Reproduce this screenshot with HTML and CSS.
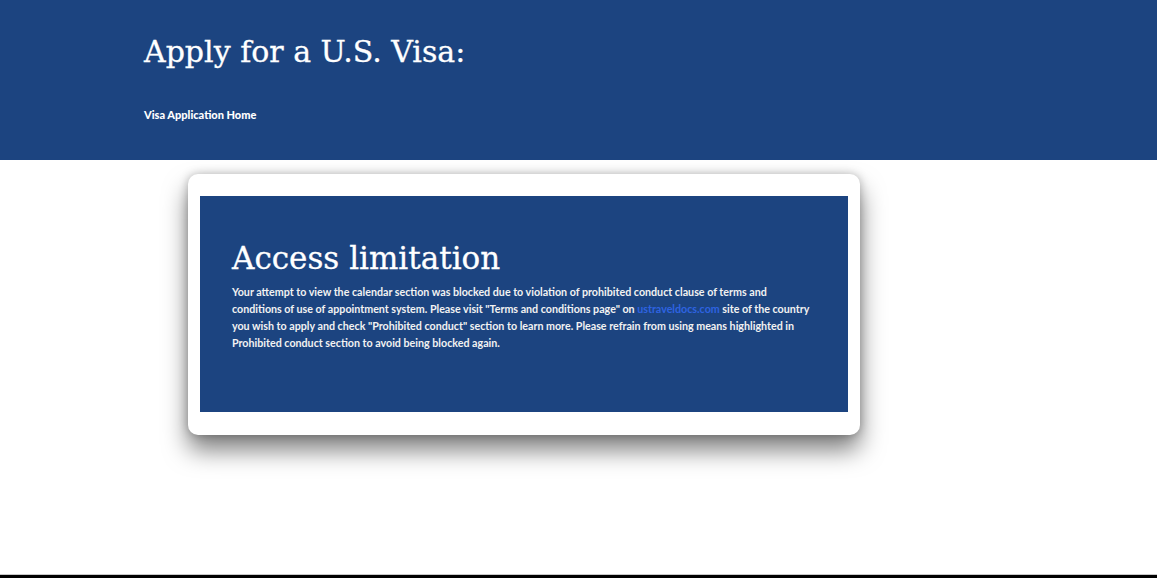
FILE: index.html
```html
<!DOCTYPE html>
<html lang="en">
<head>
<meta charset="utf-8">
<title>Apply for a U.S. Visa</title>
<link rel="stylesheet" href="styles.css">
</head>
<body>
<div class="page">
  <header class="header">
    <h1 class="site-title">Apply for a U.S. Visa:</h1>
    <nav class="nav"><a class="nav-link" href="#">Visa Application Home</a></nav>
  </header>
  <main class="main">
    <div class="card">
      <div class="panel">
        <h2 class="panel-title">Access limitation</h2>
        <p class="panel-text">Your attempt to view the calendar section was blocked due to violation of prohibited conduct clause of terms and conditions of use of appointment system. Please visit "Terms and conditions page" on <a class="link" href="#">ustraveldocs.com</a> site of the country you wish to apply and check "Prohibited conduct" section to learn more. Please refrain from using means highlighted in Prohibited conduct section to avoid being blocked again.</p>
      </div>
    </div>
  </main>
</div>
</body>
</html>
```

FILE: styles.css
```css
html, body {
  margin: 0;
  padding: 0;
  background: #ffffff;
}
.page {
  height: 578px;
  box-sizing: border-box;
  display: flex;
  flex-direction: column;
  border-bottom: 3px solid #000;
  position: relative;
}
.page::after {
  content: "";
  position: absolute;
  left: 0;
  right: 0;
  bottom: 0;
  height: 1px;
  background: #c8c8c8;
}
.header {
  background: #1c4480;
  height: 160px;
  box-sizing: border-box;
  padding: 30px 0 0 144px;
}
.site-title {
  margin: 0;
  font-family: "DejaVu Serif", serif;
  font-weight: normal;
  font-size: 30px;
  line-height: 44px;
  color: #ffffff;
  -webkit-text-stroke: 0.3px #ffffff;
}
.nav {
  margin-top: 31px;
}
.nav-link {
  font-family: "Lato", "Open Sans", sans-serif;
  font-weight: 900;
  font-size: 11px;
  color: #ffffff;
  text-decoration: none;
}
.main {
  padding: 14px 0 0 188px;
}
.card {
  width: 672px;
  box-sizing: border-box;
  background: #ffffff;
  border-radius: 10px;
  padding: 22px 12px 23px 12px;
  box-shadow: 0 15px 24px rgba(0, 0, 0, 0.5), 0 0 10px rgba(0, 0, 0, 0.25);
}
.panel {
  background: #1c4480;
  height: 216px;
  box-sizing: border-box;
  padding: 42px 32px 0 32px;
}
.panel-title {
  margin: 0;
  font-family: "DejaVu Serif", serif;
  font-weight: normal;
  font-size: 31px;
  line-height: 40px;
  color: #ffffff;
  -webkit-text-stroke: 0.3px #ffffff;
}
.panel-text {
  margin: 5px 0 0 0;
  font-family: "Lato", "Open Sans", sans-serif;
  font-weight: 700;
  font-size: 10.7px;
  line-height: 17px;
  color: #f2f2f2;
}
.link {
  color: #2e63e0;
  text-decoration: none;
}
```
